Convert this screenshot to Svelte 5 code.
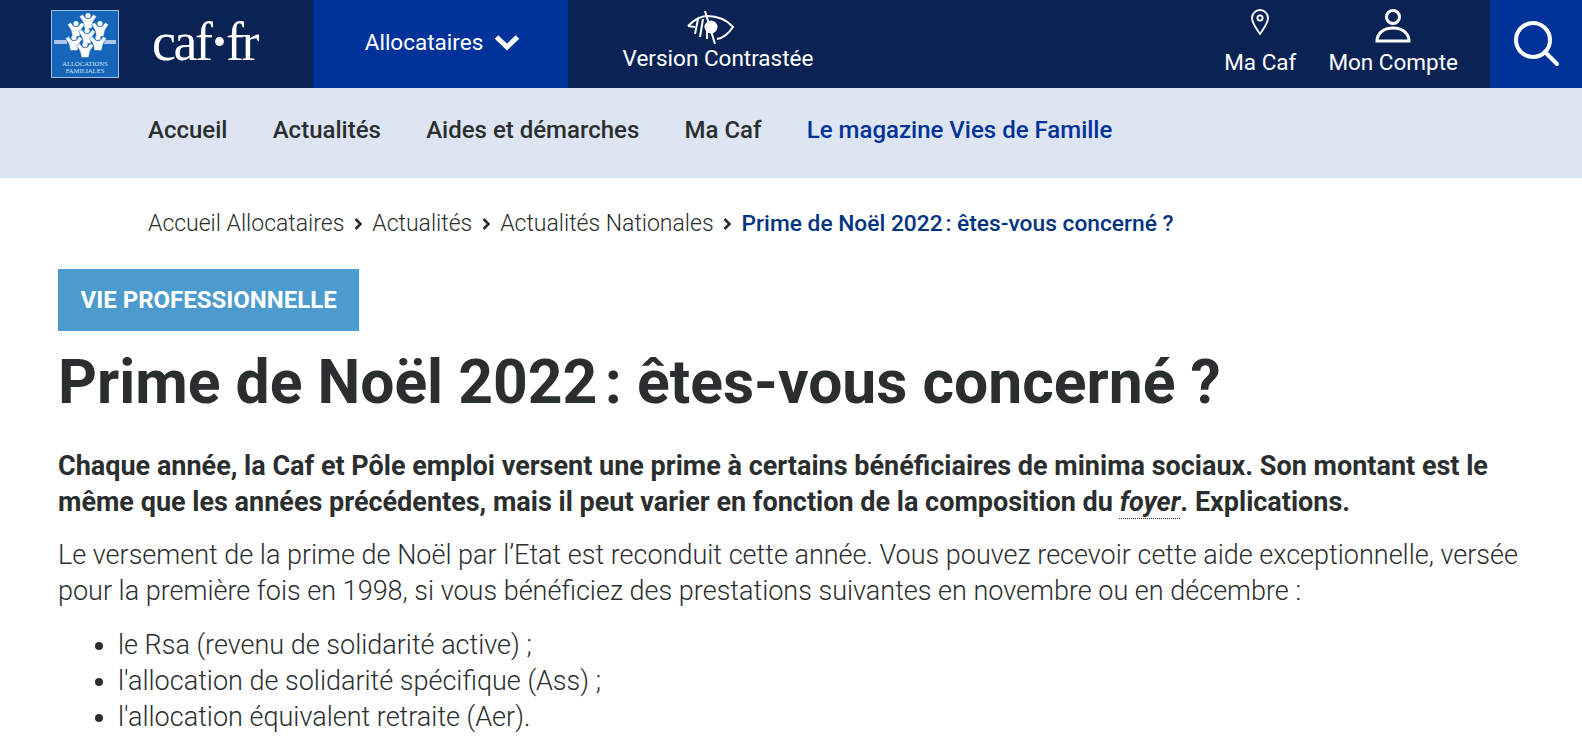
<script>
  const navItems = ['Accueil', 'Actualités', 'Aides et démarches', 'Ma Caf'];
  const crumbs = ['Accueil Allocataires', 'Actualités', 'Actualités Nationales'];
  const prestations = [
    'le Rsa (revenu de solidarité active) ;',
    "l'allocation de solidarité spécifique (Ass) ;",
    "l'allocation équivalent retraite (Aer)."
  ];
  // positions of the seven figures in the logo
  const figures = [
    [37, 11], [25, 19], [49, 19], [36, 26], [23, 33], [47, 33], [34, 40]
  ];
</script>

<header class="topbar">
  <div class="brand">
    <svg class="logo" viewBox="0 0 68 68" aria-label="Allocations familiales">
      <rect x="0.5" y="0.5" width="67" height="67" fill="#1565b8" stroke="#9fc0e6" />
      <rect x="3" y="30" width="13" height="4" fill="#a9c4e6" />
      <rect x="53" y="30" width="12" height="4" fill="#a9c4e6" />
      {#each figures as [x, y]}
        <g transform="translate({x} {y})">
          <circle cx="0" cy="-5.5" r="2.6" fill="#fff" />
          <path d="M-8.500-4.500l3-2 3.500 4h4l3.500-4 3 2L5 1 3.500 7.500h-7L-5 1z" fill="#fff" stroke="#1565b8" stroke-width="0.5" />
        </g>
      {/each}
      <text x="34" y="56" class="logo-text">ALLOCATIONS</text>
      <text x="34" y="63" class="logo-text">FAMILIALES</text>
    </svg>
    <span class="wordmark">caf<span class="dot">·</span>fr</span>
  </div>

  <button class="allocataires">
    <span>Allocataires</span>
    <svg width="26" height="18" viewBox="0 0 26 18"><path d="M2.500 4l10.500 10L23.500 4" fill="none" stroke="#fff" stroke-width="5" /></svg>
  </button>

  <div class="contrast">
    <svg class="eye" width="48" height="34" viewBox="0 0 48 34" fill="none" stroke="#fff" stroke-width="2">
      <path d="M1 15C7 9 13 5 20 5c10 0 20 4 26 11-4 6-10 11-16 12" />
      <path d="M1 15l7 1" />
      <circle cx="24" cy="16" r="5.500" fill="#fff" />
      <path d="M18 0l10 33M11 8L8 23M16 8l-3 18M20 13v15" />
    </svg>
    <span>Version Contrastée</span>
  </div>

  <div class="spacer"></div>

  <div class="tool">
    <svg width="20" height="28" viewBox="0 0 20 28" fill="none" stroke="#fff" stroke-width="1.8">
      <path d="M10 26C6 20 2 15 2 10a8 8 0 0 1 16 0c0 5-4 10-8 16z" />
      <circle cx="10" cy="10" r="2.6" />
    </svg>
    <span>Ma Caf</span>
  </div>

  <div class="tool">
    <svg width="36" height="36" viewBox="0 0 36 36" fill="none" stroke="#fff" stroke-width="3">
      <circle cx="18" cy="9" r="6.500" />
      <path d="M2 33c0-8 7-13 16-13s16 5 16 13z" />
    </svg>
    <span>Mon Compte</span>
  </div>

  <button class="search" aria-label="Rechercher">
    <svg width="48" height="48" viewBox="0 0 48 48" fill="none" stroke="#fff" stroke-width="4">
      <circle cx="21" cy="20" r="17" />
      <path d="M33 32l12 12" stroke-linecap="round" />
    </svg>
  </button>
</header>

<nav class="subnav">
  {#each navItems as item}
    <span>{item}</span>
  {/each}
  <span class="magazine">Le magazine Vies de Famille</span>
</nav>

<div class="crumbs">
  {#each crumbs as crumb}
    <span>{crumb}</span>
    <svg width="11" height="14" viewBox="0 0 11 14"><path d="M2.500 2l5 5-5 5" fill="none" stroke="#2a2e2e" stroke-width="2.6" /></svg>
  {/each}
  <strong>Prime de Noël 2022&#8239;: êtes-vous concerné ?</strong>
</div>

<main class="article">
  <div class="tag">VIE PROFESSIONNELLE</div>
  <h1>Prime de Noël 2022&#8239;: êtes-vous concerné ?</h1>
  <p class="lead">
    Chaque année, la Caf et Pôle emploi versent une prime à certains bénéficiaires de minima sociaux. Son montant est le même que les années précédentes, mais il peut varier en fonction de la composition du <em>foyer</em>. Explications.
  </p>
  <p class="body">
    Le versement de la prime de Noël par l’Etat est reconduit cette année. Vous pouvez recevoir cette aide exceptionnelle, versée pour la première fois en 1998, si vous bénéficiez des prestations suivantes en novembre ou en décembre :
  </p>
  <ul>
    {#each prestations as line}
      <li>{line}</li>
    {/each}
  </ul>
</main>

<style>
  :global(body) {
    font-family: Roboto, "Liberation Sans", sans-serif;
    color: #2a2e2e;
    background: #fff;
    overflow: hidden;
  }

  .topbar {
    display: flex;
    height: 88px;
    background: #0a2254;
    color: #fff;
  }

  .brand {
    display: flex;
    align-items: center;
    width: 313px;
    padding-left: 51px;
    box-sizing: border-box;
  }

  .logo {
    width: 68px;
    height: 68px;
  }

  .logo-text {
    font-family: "Liberation Serif", serif;
    font-size: 6.6px;
    fill: #dbe6f5;
    text-anchor: middle;
  }

  .wordmark {
    margin: 0 0 4px 33px;
    font-family: "Liberation Serif", serif;
    font-size: 54px;
    letter-spacing: -2.5px;
    color: #fff;
  }

  .dot {
    font-weight: 700;
  }

  .allocataires {
    display: flex;
    align-items: center;
    justify-content: center;
    gap: 11px;
    width: 255px;
    padding: 0 0 5px 4px;
    border: 0;
    background: #003399;
    color: #fff;
    font: 400 22.5px Roboto, sans-serif;
  }

  .contrast {
    display: flex;
    flex-direction: column;
    align-items: center;
    width: 300px;
    padding-top: 11px;
    box-sizing: border-box;
    font-size: 22.5px;
  }

  .eye {
    margin-right: 14px;
  }

  .spacer {
    flex: 1;
  }

  .tool {
    display: flex;
    flex-direction: column;
    align-items: center;
    justify-content: space-between;
    padding: 8px 0 13px;
    box-sizing: border-box;
    font-size: 22.5px;
    margin-right: 32px;
  }

  .search {
    width: 92px;
    border: 0;
    background: #003399;
    display: flex;
    align-items: center;
    justify-content: center;
  }

  .subnav {
    display: flex;
    align-items: center;
    gap: 45.3px;
    height: 90px;
    padding: 0 0 6px 148px;
    box-sizing: border-box;
    background: #dde5f3;
    font-size: 24px;
    font-weight: 500;
  }

  .magazine {
    color: #003399;
  }

  .crumbs {
    display: flex;
    align-items: center;
    gap: 8.5px;
    padding: 33px 0 0 148px;
    font-size: 23px;
    font-weight: 300;
    line-height: 26px;
  }

  .crumbs strong {
    color: #003380;
    font-weight: 500;
    font-size: 22.75px;
  }

  .article {
    padding: 32px 64px 0 58px;
  }

  .tag {
    display: inline-block;
    padding: 0 22.5px;
    height: 62px;
    line-height: 62px;
    background: #4c9bcf;
    color: #fff;
    font-size: 24px;
    font-weight: 700;
  }

  h1 {
    margin: 15px 0 0;
    font-size: 60.6px;
    line-height: 74px;
    font-weight: 700;
  }

  .lead {
    margin: 28px 0 0;
    font-size: 27px;
    line-height: 36px;
    font-weight: 700;
  }

  .lead em {
    text-decoration: underline dotted 1px;
    text-underline-offset: 7px;
    text-decoration-skip-ink: none;
  }

  .body {
    margin: 17px 0 0;
    font-size: 27px;
    line-height: 36px;
    font-weight: 300;
  }

  ul {
    margin: 18px 0 0;
    padding-left: 60px;
    font-size: 27px;
    line-height: 36px;
    font-weight: 300;
  }
</style>
